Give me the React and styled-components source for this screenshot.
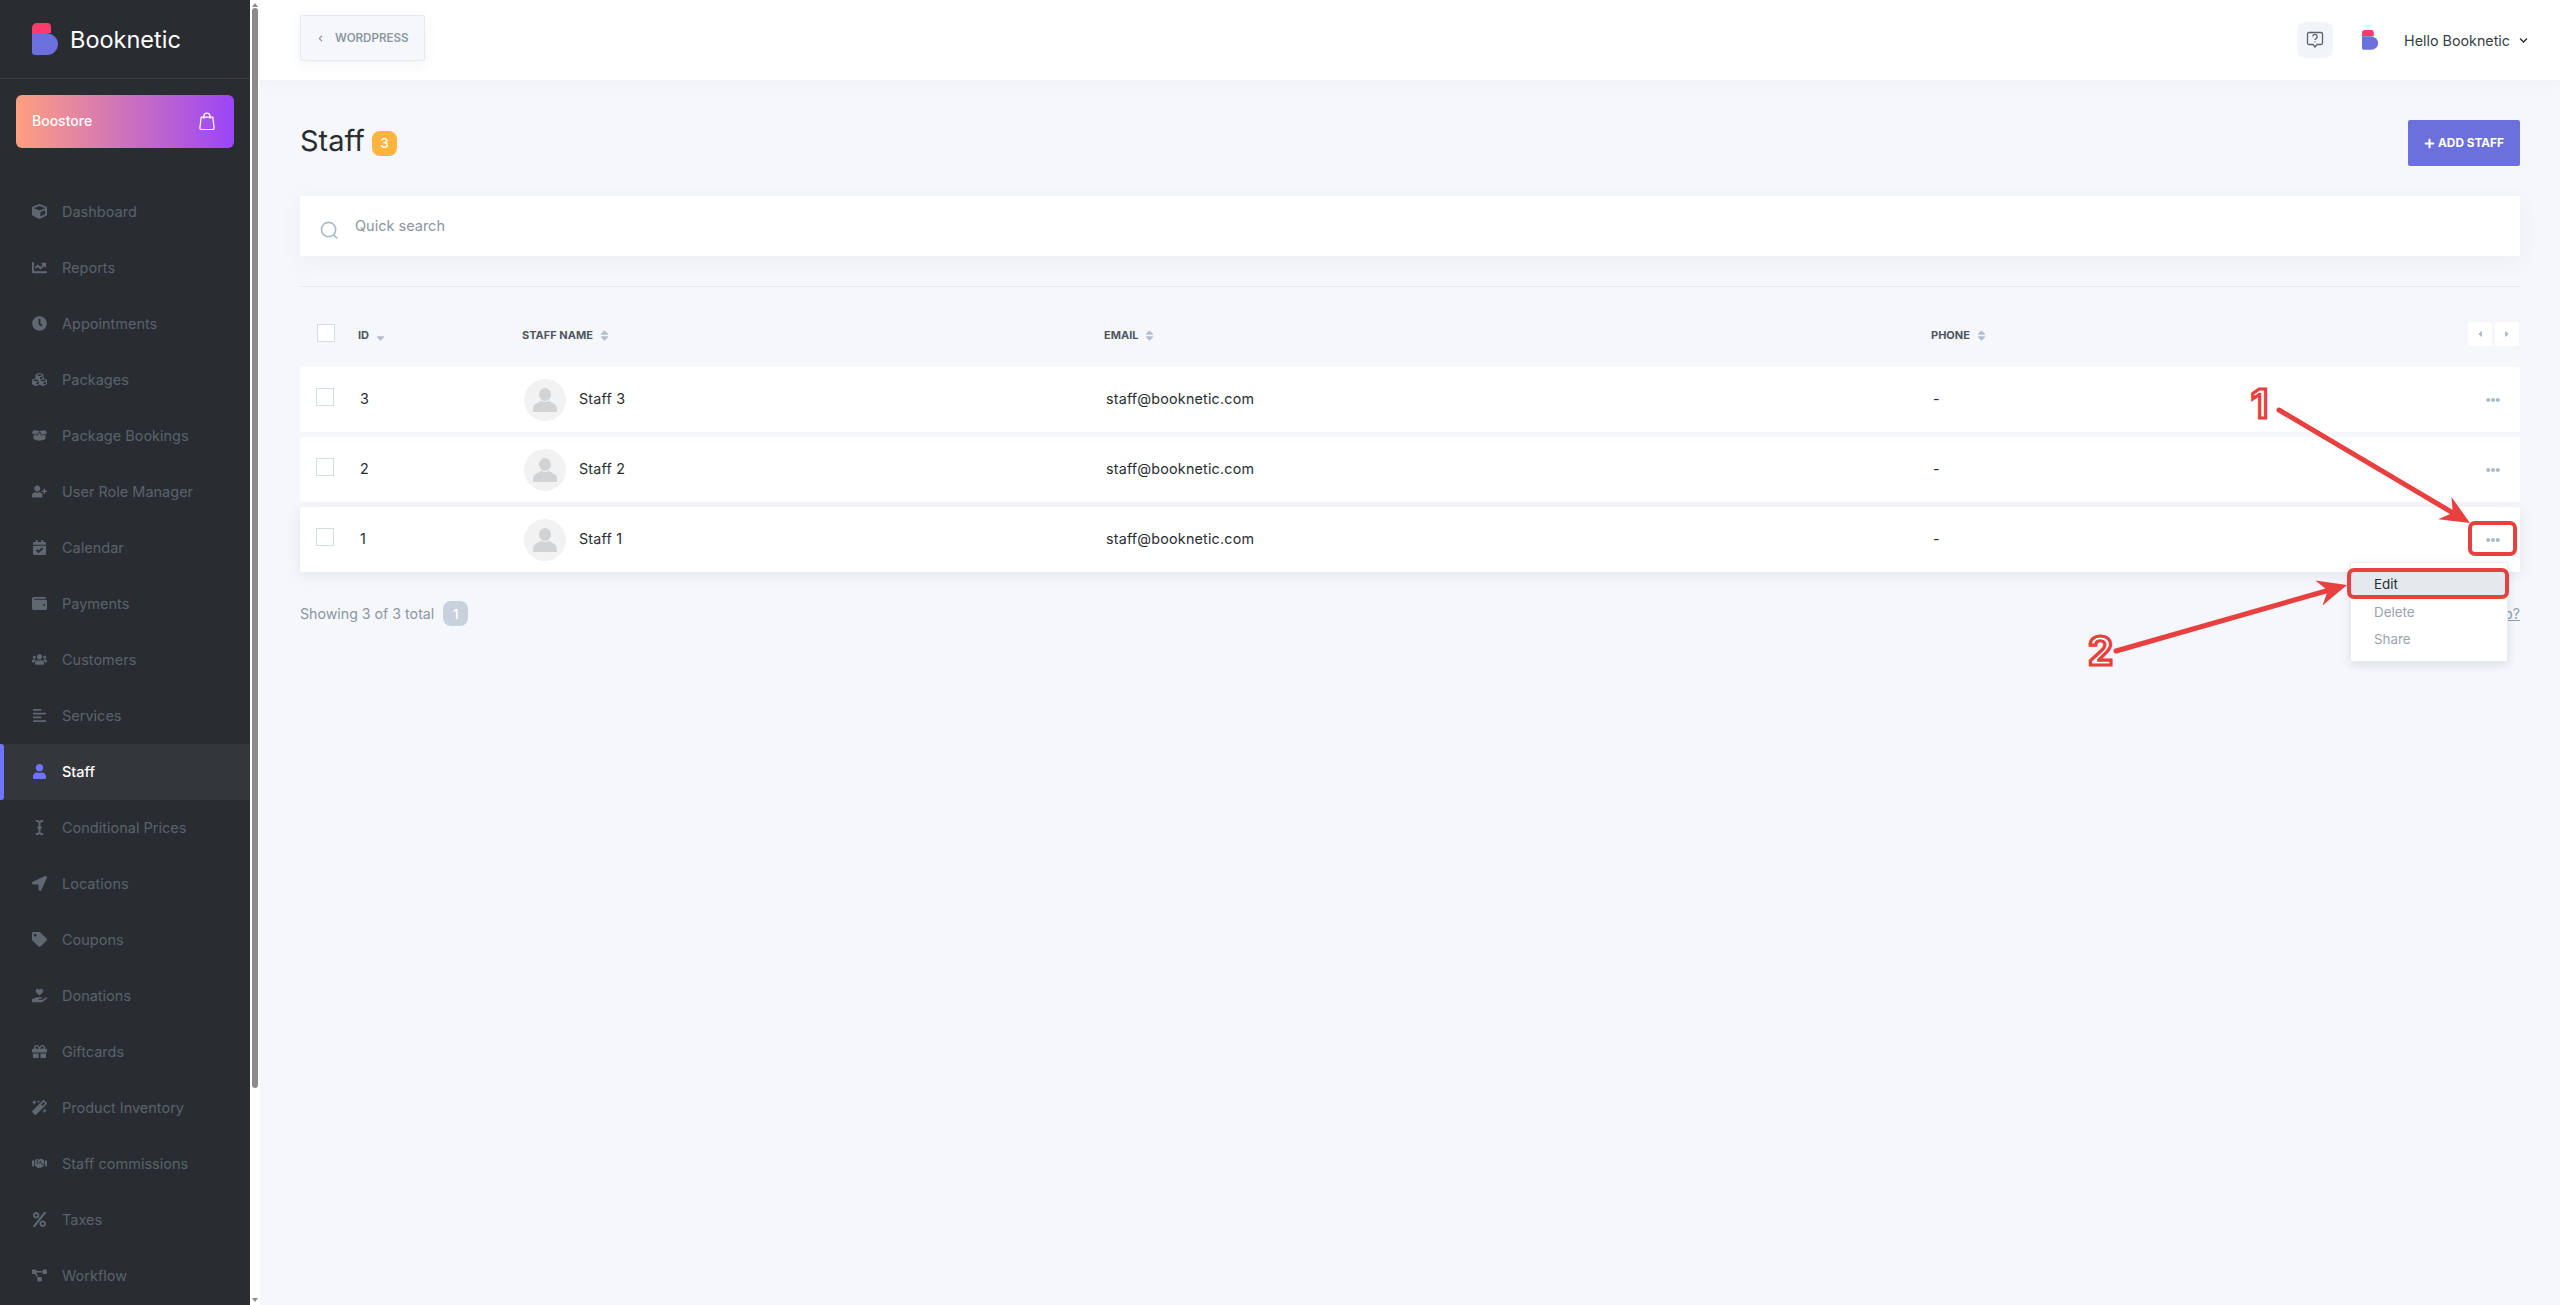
import React from 'react';
import styled, { createGlobalStyle } from 'styled-components';
import {
  FaCube, FaChartLine, FaClock, FaCubes, FaBoxOpen, FaUserPlus, FaCalendarCheck, FaWallet,
  FaUsers, FaAlignLeft, FaUser, FaICursor, FaLocationArrow, FaTag, FaHandHoldingHeart, FaGift,
  FaMagic, FaHandshake, FaPercent, FaProjectDiagram, FaPlus, FaChevronDown, FaChevronLeft,
  FaCaretLeft, FaCaretRight, FaEllipsisH, FaSort, FaSortDown,
} from 'react-icons/fa';

const GlobalStyle = createGlobalStyle`
  html, body {
    margin: 0;
    height: 100%;
    overflow: hidden;
    background: #f5f7fb;
  }
  body {
    font-family: 'Inter', 'Liberation Sans', sans-serif;
    color: #292d32;
  }
  * { box-sizing: border-box; }
`;

const Page = styled.div`
  position: relative;
  display: flex;
  width: 2560px;
  height: 1305px;
  overflow: hidden;
`;

const Sidebar = styled.aside`
  width: 250px;
  flex: none;
  background: #292d32;
  overflow: hidden;
`;

const Brand = styled.div`
  height: 79px;
  padding-left: 32px;
  display: flex;
  align-items: center;
  gap: 12px;
  border-bottom: 1px solid #3b3f44;
`;

const BrandName = styled.span`
  font-size: 23.5px;
  color: #fff;
`;

const Boostore = styled.div`
  margin: 16px 16px 0;
  height: 53px;
  padding: 0 19px 0 16px;
  border-radius: 6px;
  background: linear-gradient(90deg, #ff9f7f 0%, #9b45f8 100%);
  display: flex;
  align-items: center;
  justify-content: space-between;
  color: #fff;
  font-size: 14px;
  font-weight: 500;
`;

const BoostoreLabel = styled.span`
  margin-bottom: 2px;
`;

const Menu = styled.nav`
  margin-top: 36px;
`;

const MenuRow = styled.div`
  position: relative;
  height: 56px;
  padding: 0 0 2px 32px;
  display: flex;
  align-items: center;
  font-size: 14.5px;
  color: ${p => (p.$active ? '#fff' : '#5a626c')};
  font-weight: ${p => (p.$active ? 500 : 400)};
  background: ${p => (p.$active ? '#33363b' : 'transparent')};

  svg {
    color: ${p => (p.$active ? '#7173ff' : '#5f6771')};
  }

  &::before {
    content: '';
    display: ${p => (p.$active ? 'block' : 'none')};
    position: absolute;
    left: 0;
    top: 0;
    bottom: 0;
    width: 4px;
    border-radius: 0 3px 3px 0;
    background: #7173ff;
  }
`;

const MenuIcon = styled.span`
  width: 30px;
  flex: none;
  display: flex;
  align-items: center;

  svg {
    width: auto;
    height: 15px;
  }
`;

const ScrollRail = styled.div`
  width: 10px;
  flex: none;
  background: #fff;
  padding: 3px 2px 0;
  display: flex;
  flex-direction: column;
  align-items: center;
  justify-content: space-between;
  height: 100%;
`;

const ScrollArrow = styled.div`
  width: 0;
  height: 0;
  border-left: 3px solid transparent;
  border-right: 3px solid transparent;
  border-${p => (p.$down ? 'top' : 'bottom')}: 4px solid #8c8c8c;
  margin-bottom: ${p => (p.$down ? '3px' : '0')};
`;

const ScrollThumb = styled.div`
  width: 6px;
  height: 1080px;
  margin-top: 1px;
  margin-bottom: auto;
  border-radius: 3px;
  background: #8c8c8c;
`;

const Main = styled.main`
  flex: 1;
  min-width: 0;
`;

const TopBar = styled.header`
  height: 80px;
  background: #fff;
  padding: 0 32px 0 40px;
  display: flex;
  align-items: center;
  justify-content: space-between;
  box-shadow: 0 2px 14px rgba(60, 70, 100, 0.04);
`;

const BackButton = styled.div`
  width: 125px;
  height: 46px;
  margin-top: -4px;
  display: flex;
  align-items: center;
  padding-left: 16px;
  gap: 11px;
  background: #f5f7fb;
  border: 1px solid #e3eaf3;
  border-radius: 2px;
  box-shadow: 0 4px 14px rgba(60, 70, 100, 0.06);
  color: #8d97a3;
  font-size: 11.6px;
  font-weight: 600;
`;

const TopRight = styled.div`
  display: flex;
  align-items: center;
`;

const HelpButton = styled.div`
  width: 36px;
  height: 36px;
  margin-right: 29px;
  border-radius: 8px;
  background: #f1f4f8;
  display: flex;
  align-items: center;
  justify-content: center;
`;

const Hello = styled.span`
  margin: 0 9px 0 26px;
  font-size: 14.3px;
  color: #3a3f45;
`;

const Content = styled.div`
  padding: 0 40px;
`;

const TitleRow = styled.div`
  height: 116px;
  display: flex;
  align-items: center;
  justify-content: space-between;
  padding-top: 10px;
`;

const TitleWrap = styled.div`
  display: flex;
  align-items: center;
  gap: 7px;
`;

const Title = styled.h1`
  margin: 0 0 6px;
  font-size: 29px;
  font-weight: 400;
  color: #292d32;
`;

const Count = styled.span`
  width: 25px;
  height: 25px;
  border-radius: 8px;
  background: ${p => p.$color || '#ffb53d'};
  color: #fff;
  font-size: 13.5px;
  font-weight: 500;
  display: flex;
  align-items: center;
  justify-content: center;
`;

const AddButton = styled.div`
  width: 112px;
  height: 46px;
  border-radius: 2px;
  background: #6c70dc;
  color: #fff;
  font-size: 11.8px;
  font-weight: 700;
  display: flex;
  align-items: center;
  justify-content: center;
  gap: 3px;
`;

const Search = styled.div`
  height: 60px;
  background: #fff;
  border-radius: 2px;
  padding-left: 20px;
  display: flex;
  align-items: center;
  gap: 16px;
  box-shadow: 0 6px 24px rgba(60, 70, 100, 0.05);
  color: #8b96a3;
  font-size: 14.5px;
`;

const SearchText = styled.span`
  margin-bottom: 2px;
`;

const SearchIcon = styled.svg`
  width: 19px;
  height: 19px;
  margin-top: 8px;
  fill: none;
  stroke: #a9bcc6;
  stroke-width: 1.7;
`;

const Divider = styled.div`
  height: 1px;
  margin-top: 30px;
  background: #e3eaf3;
`;

const columns = '42px 164px 582px 827px 1fr auto';

const HeadRow = styled.div`
  height: 80px;
  display: grid;
  grid-template-columns: ${columns};
  align-items: center;
  padding: 14px 1px 0 16px;
  font-size: 11px;
  font-weight: 700;
  color: #4f565e;
`;

const HeadCell = styled.div`
  display: flex;
  align-items: center;
  gap: 5px;
  padding-top: 2px;
  svg {
    width: auto;
    height: 13px;
    color: #b3bfcc;
  }
`;

const Check = styled.span`
  display: block;
  width: 18px;
  height: 18px;
  background: #fff;
  border: 1px solid #d3dde4;
  margin: ${p => (p.$head ? '-2px 0 0 1px' : '-5px 0 0 0')};
`;

const Pager = styled.div`
  display: flex;
  gap: 3px;
`;

const PagerButton = styled.div`
  width: 24px;
  height: 24px;
  background: #fff;
  border-radius: 2px;
  display: flex;
  align-items: center;
  justify-content: center;
  svg {
    color: #a9bcc6;
    font-size: 10px;
  }
`;

const Rows = styled.div`
  display: flex;
  flex-direction: column;
  gap: 5px;
`;

const Row = styled.div`
  height: 65px;
  display: grid;
  grid-template-columns: ${columns};
  align-items: center;
  padding: 0 0 0 16px;
  background: #fff;
  border-radius: 2px;
  font-size: 14.3px;
  letter-spacing: 0.2px;
  color: #292d32;
  box-shadow: ${p => (p.$hover ? '0 3px 14px rgba(60, 70, 100, 0.1)' : 'none')};
`;

const TextCell = styled.div`
  padding-left: 2px;
  margin-bottom: 2px;
`;

const StaffCell = styled.div`
  display: flex;
  align-items: center;
  gap: 13px;
  padding-left: 2px;
`;

const StaffName = styled.span`
  margin-bottom: 2px;
`;

const Avatar = styled.div`
  width: 42px;
  height: 42px;
  border-radius: 50%;
  background: #f2f2f3;
  display: flex;
  align-items: center;
  justify-content: center;
`;

const Dots = styled.div`
  width: 50px;
  display: flex;
  justify-content: center;
  color: #a9bcc6;
  font-size: 14px;
  padding-right: 4px;
  line-height: 0;
`;

const Footer = styled.div`
  margin-top: 29px;
  display: flex;
  align-items: center;
  justify-content: space-between;
  color: #8b96a3;
  font-size: 14.2px;
`;

const Showing = styled.div`
  display: flex;
  align-items: center;
  gap: 9px;
`;

const HelpLink = styled.span`
  text-decoration: underline;
  color: #8b9cb0;
`;

const Dropdown = styled.div`
  position: absolute;
  left: 2350px;
  top: 562px;
  width: 158px;
  height: 100px;
  padding-top: 7px;
  background: #fff;
  border: 1px solid #e8edf4;
  border-radius: 2px;
  box-shadow: 0 3px 10px rgba(60, 70, 100, 0.14);
  font-size: 13.4px;
`;

const DropItem = styled.div`
  height: ${p => (p.$active ? '28px' : '27px')};
  padding-left: 23px;
  display: flex;
  align-items: center;
  color: ${p => (p.$active ? '#292d32' : '#98a3af')};
  background: ${p => (p.$active ? '#e3e9ed' : 'transparent')};
`;

const Overlay = styled.svg`
  position: absolute;
  left: 0;
  top: 0;
  width: 2560px;
  height: 1305px;
  pointer-events: none;
`;

const StepNumber = styled.text`
  font-family: 'Inter', sans-serif;
  font-weight: 700;
  font-size: 40px;
  fill: #fff;
  stroke: #e8403f;
  stroke-width: 3.2;
`;

const Logo = ({ scale = 1 }) => (
  <svg width={26 * scale} height={32 * scale} viewBox="0 0 26 32">
    <path d="M0 5a5 5 0 0 1 5-5h10a4 4 0 0 1 4 4v6H0z" fill="#fc3a6b" />
    <path d="M0 10h13a13 11 0 0 1 13 11 11 11 0 0 1-11 11H3a3 3 0 0 1-3-3z" fill="#6c70dc" />
  </svg>
);

const BagIcon = () => (
  <svg width="16" height="19" viewBox="0 0 18 20" fill="none" stroke="#fff" strokeWidth="1.4">
    <path d="M2.500 5h13l1.500 12.200a1.600 1.600 0 0 1-1.600 1.800H2.600A1.600 1.600 0 0 1 1 17.200z" strokeLinejoin="round" />
    <path d="M5.500 7V4a3.500 3.500 0 0 1 7 0v3" />
  </svg>
);

const HelpIcon = () => (
  <svg width="18" height="18" viewBox="0 0 18 18" fill="none" stroke="#5b636c" strokeWidth="1.3">
    <path d="M3 1.500h12a1.500 1.500 0 0 1 1.500 1.500v9a1.500 1.500 0 0 1-1.500 1.500h-4L9 16l-2-2.500H3A1.500 1.500 0 0 1 1.500 12V3A1.500 1.500 0 0 1 3 1.500z" strokeLinejoin="round" />
    <path d="M6.800 5.600a2.200 2.200 0 1 1 3.200 2c-.7.4-1 .8-1 1.500" />
    <path d="M9 10.400v1" />
  </svg>
);

const AvatarIcon = () => (
  <svg width="24" height="24" viewBox="0 0 24 24" fill="#d2d3d5">
    <ellipse cx="12" cy="6.500" rx="6" ry="6.500" />
    <path d="M8 12.500c-1 2-7 3-7.800 6.500L0 24h24l-.2-5c-.8-3.500-6.800-4.500-7.800-6.500-2.500 2-5.500 2-8 0z" />
  </svg>
);

const Arrow = ({ x1, y1, x2, y2 }) => {
  const angle = Math.atan2(y2 - y1, x2 - x1);
  const size = 32;
  const wing = 0.42;
  const p1 = [x2 - size * Math.cos(angle - wing), y2 - size * Math.sin(angle - wing)];
  const p2 = [x2 - size * Math.cos(angle + wing), y2 - size * Math.sin(angle + wing)];
  const neck = [x2 - 20 * Math.cos(angle), y2 - 20 * Math.sin(angle)];
  return (
    <g>
      <line x1={x1} y1={y1} x2={neck[0]} y2={neck[1]} stroke="#e8403f" strokeWidth="5" strokeLinecap="round" />
      <polygon points={`${x2},${y2} ${p1.join(',')} ${neck.join(',')} ${p2.join(',')}`} fill="#e8403f" />
    </g>
  );
};

const menuItems = [
  ['Dashboard', FaCube],
  ['Reports', FaChartLine],
  ['Appointments', FaClock],
  ['Packages', FaCubes],
  ['Package Bookings', FaBoxOpen],
  ['User Role Manager', FaUserPlus],
  ['Calendar', FaCalendarCheck],
  ['Payments', FaWallet],
  ['Customers', FaUsers],
  ['Services', FaAlignLeft],
  ['Staff', FaUser],
  ['Conditional Prices', FaICursor],
  ['Locations', FaLocationArrow],
  ['Coupons', FaTag],
  ['Donations', FaHandHoldingHeart],
  ['Giftcards', FaGift],
  ['Product Inventory', FaMagic],
  ['Staff commissions', FaHandshake],
  ['Taxes', FaPercent],
  ['Workflow', FaProjectDiagram],
];

const staff = [3, 2, 1];

export default function App() {
  return (
    <>
      <GlobalStyle />
      <Page>
        <Sidebar>
          <Brand>
            <Logo />
            <BrandName>Booknetic</BrandName>
          </Brand>
          <Boostore>
            <BoostoreLabel>Boostore</BoostoreLabel>
            <BagIcon />
          </Boostore>
          <Menu>
            {menuItems.map(([label, Icon]) => (
              <MenuRow key={label} $active={label === 'Staff'}>
                <MenuIcon><Icon /></MenuIcon>
                {label}
              </MenuRow>
            ))}
          </Menu>
        </Sidebar>
        <ScrollRail>
          <ScrollArrow />
          <ScrollThumb />
          <ScrollArrow $down />
        </ScrollRail>
        <Main>
          <TopBar>
            <BackButton>
              <FaChevronLeft size={7} />
              WORDPRESS
            </BackButton>
            <TopRight>
              <HelpButton><HelpIcon /></HelpButton>
              <Logo scale={0.62} />
              <Hello>Hello Booknetic</Hello>
              <FaChevronDown size={9} color="#292d32" />
            </TopRight>
          </TopBar>
          <Content>
            <TitleRow>
              <TitleWrap>
                <Title>Staff</Title>
                <Count>3</Count>
              </TitleWrap>
              <AddButton><FaPlus size={11} /> ADD STAFF</AddButton>
            </TitleRow>
            <Search>
              <SearchIcon viewBox="0 0 20 20">
                <circle cx="9" cy="9" r="7.500" />
                <path d="M14.500 14.500L18 18.500" />
              </SearchIcon>
              <SearchText>Quick search</SearchText>
            </Search>
            <Divider />
            <HeadRow>
              <Check $head />
              <HeadCell>ID <FaSortDown /></HeadCell>
              <HeadCell>STAFF NAME <FaSort /></HeadCell>
              <HeadCell>EMAIL <FaSort /></HeadCell>
              <HeadCell>PHONE <FaSort /></HeadCell>
              <Pager>
                <PagerButton><FaCaretLeft /></PagerButton>
                <PagerButton><FaCaretRight /></PagerButton>
              </Pager>
            </HeadRow>
            <Rows>
              {staff.map(id => (
                <Row key={id} $hover={id === 1}>
                  <Check />
                  <TextCell>{id}</TextCell>
                  <StaffCell>
                    <Avatar><AvatarIcon /></Avatar>
                    <StaffName>Staff {id}</StaffName>
                  </StaffCell>
                  <TextCell>staff@booknetic.com</TextCell>
                  <TextCell>-</TextCell>
                  <Dots><FaEllipsisH /></Dots>
                </Row>
              ))}
            </Rows>
            <Footer>
              <Showing>
                Showing 3 of 3 total
                <Count $color="#c9d2dc">1</Count>
              </Showing>
              <HelpLink>Need Help?</HelpLink>
            </Footer>
          </Content>
        </Main>
        <Dropdown>
          <DropItem $active>Edit</DropItem>
          <DropItem>Delete</DropItem>
          <DropItem>Share</DropItem>
        </Dropdown>
        <Overlay viewBox="0 0 2560 1305">
          <rect x="2470" y="523" width="45" height="31" rx="5" fill="none" stroke="#e8403f" strokeWidth="4" />
          <rect x="2349" y="570" width="158" height="27" rx="5" fill="none" stroke="#e8403f" strokeWidth="4" />
          <Arrow x1={2279} y1={410} x2={2470} y2={523} />
          <Arrow x1={2116} y1={651} x2={2347} y2={585} />
          <StepNumber x="2251" y="418">1</StepNumber>
          <StepNumber x="2088" y="665">2</StepNumber>
        </Overlay>
      </Page>
    </>
  );
}
